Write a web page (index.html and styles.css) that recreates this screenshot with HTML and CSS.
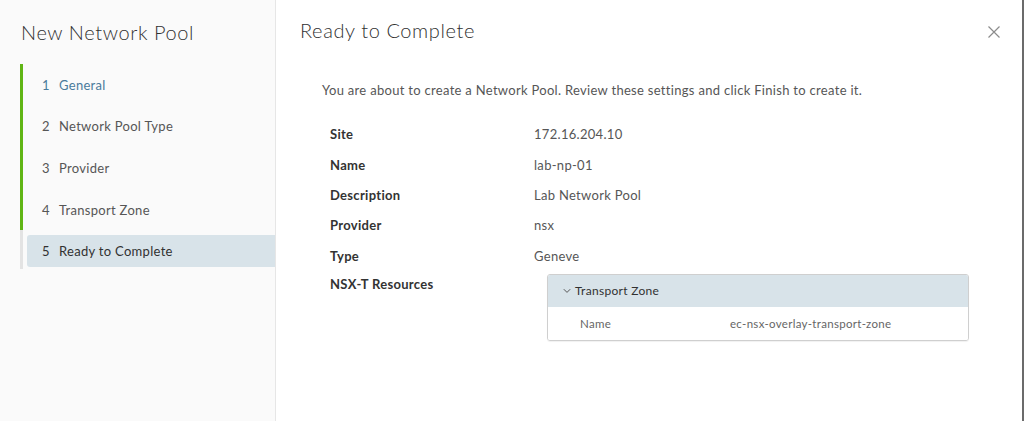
FILE: index.html
```html
<!DOCTYPE html>
<html>
<head>
<meta charset="utf-8">
<link rel="stylesheet" href="styles.css">
</head>
<body>
<div class="modal">
  <aside class="sidebar">
    <h2 class="sidebar-title">New Network Pool</h2>
    <ol class="steps">
      <li class="step done active-link"><div class="step-inner"><span class="num">1</span><span class="label">General</span></div></li>
      <li class="step done"><div class="step-inner"><span class="num">2</span><span class="label">Network Pool Type</span></div></li>
      <li class="step done"><div class="step-inner"><span class="num">3</span><span class="label">Provider</span></div></li>
      <li class="step done"><div class="step-inner"><span class="num">4</span><span class="label">Transport Zone</span></div></li>
      <li class="step current"><div class="step-inner"><span class="num">5</span><span class="label">Ready to Complete</span></div></li>
    </ol>
  </aside>
  <main class="content">
    <header class="content-header">
      <h3 class="content-title">Ready to Complete</h3>
      <button class="close" aria-label="Close">
        <svg width="12" height="12" viewBox="0 0 12 12"><path d="M0.5 0.5 L11.5 11.5 M11.5 0.5 L0.5 11.5" stroke="#8c8c8c" stroke-width="1.2" fill="none"/></svg>
      </button>
    </header>
    <p class="intro">You are about to create a Network Pool. Review these settings and click Finish to create it.</p>
    <div class="summary">
      <div class="row"><div class="key">Site</div><div class="val">172.16.204.10</div></div>
      <div class="row"><div class="key">Name</div><div class="val">lab-np-01</div></div>
      <div class="row"><div class="key">Description</div><div class="val">Lab Network Pool</div></div>
      <div class="row"><div class="key">Provider</div><div class="val">nsx</div></div>
      <div class="row"><div class="key">Type</div><div class="val">Geneve</div></div>
      <div class="row row-top"><div class="key">NSX-T Resources</div>
        <div class="val">
          <div class="tz-box">
            <div class="tz-head">
              <svg class="chev" width="8" height="6" viewBox="0 0 8 6"><path d="M0.8 1.2 L4 4.4 L7.2 1.2" stroke="#565656" stroke-width="1" fill="none"/></svg>
              <span>Transport Zone</span>
            </div>
            <div class="tz-body">
              <span class="tz-key">Name</span>
              <span class="tz-val">ec-nsx-overlay-transport-zone</span>
            </div>
          </div>
        </div>
      </div>
    </div>
  </main>
</div>
</body>
</html>
```

FILE: styles.css
```css
* { box-sizing: border-box; }
html, body { margin: 0; padding: 0; }
body {
  width: 1024px;
  height: 421px;
  overflow: hidden;
  font-family: "Lato", "Open Sans", sans-serif;
  color: #565656;
  background: #fff;
  letter-spacing: 0.3px;
}
.modal {
  display: flex;
  height: 421px;
  border-right: 2px solid #6b6b6b;
}
.sidebar {
  width: 276px;
  flex: none;
  background: #fafafa;
  border-right: 1px solid #e6e6e6;
  padding: 19px 0 0 20px;
}
.sidebar-title {
  margin: 0;
  font-size: 20px;
  font-weight: 300;
  color: #313131;
  line-height: 26px;
  padding-left: 1px;
  letter-spacing: 0.6px;
}
.steps {
  list-style: none;
  margin: 19px 0 0 0;
  padding: 0;
}
.step {
  height: 41.6px;
  border-left: 3px solid #60b515;
  padding: 4.8px 0 4.8px 4px;
}
.step.current {
  border-left-color: #e3e3e3;
  height: 39px;
  padding-top: 5px;
}
.step-inner {
  height: 32px;
  display: flex;
  align-items: center;
  padding-left: 15px;
  font-size: 13px;
  border-radius: 3px 0 0 3px;
}
.step.current .step-inner {
  background: #d8e3e9;
  color: #313131;
}
.num { width: 17px; }
.active-link .step-inner { color: #4a7b9c; }
.active-link .num { color: #4a7b9c; }

.content {
  flex: 1;
  padding: 0 0 0 24px;
}
.content-header {
  display: flex;
  justify-content: space-between;
  align-items: center;
  height: 64px;
  padding-right: 22px;
}
.content-title {
  margin: 0;
  font-size: 20px;
  font-weight: 300;
  color: #313131;
  position: relative;
  top: -2px;
  letter-spacing: 0.6px;
}
.close {
  border: 0;
  background: none;
  padding: 0;
  width: 12px;
  height: 12px;
  display: flex;
}
.intro {
  margin: 17px 0 0 22px;
  font-size: 13px;
  line-height: 18px;
}
.summary {
  margin: 20px 0 0 30px;
}
.row {
  display: flex;
  min-height: 30.4px;
  align-items: center;
  font-size: 13px;
}
.row-top { align-items: flex-start; }
.row-top .key { line-height: 20px; padding-top: 3px; }
.key {
  width: 204px;
  font-weight: 700;
  color: #333;
}
.val { color: #565656; }
.row-top .val { padding-top: 3px; }
.tz-box {
  margin-left: 13px;
  width: 422px;
  border: 1px solid #cfcfcf;
  border-radius: 3px;
  box-shadow: 0 1px 1px rgba(0,0,0,0.06);
  overflow: hidden;
}
.tz-head {
  height: 32px;
  background: #d8e3e9;
  display: flex;
  align-items: center;
  padding-left: 15px;
  font-size: 12px;
  color: #313131;
  gap: 4px;
}
.chev { margin-top: 1px; }
.tz-body {
  height: 33px;
  display: flex;
  align-items: center;
  padding-left: 32px;
  font-size: 11.5px;
  color: #666;
  background: #fff;
}
.tz-key { width: 150px; }
```
